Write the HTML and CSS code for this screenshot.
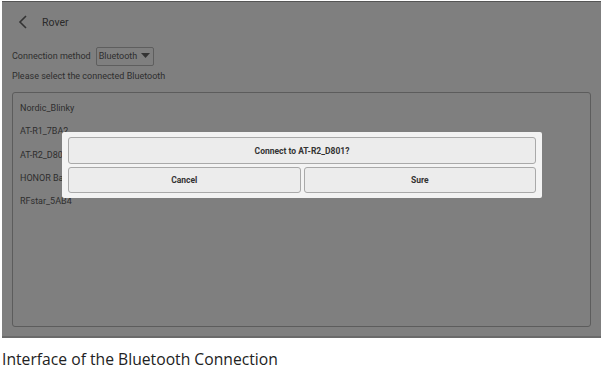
FILE: index.html
```html
<!DOCTYPE html>
<html>
<head>
<meta charset="utf-8">
<link rel="stylesheet" href="styles.css">
</head>
<body>
<div class="screen">
  <div class="header">
    <svg class="back" width="10" height="14" viewBox="0 0 10 14"><path d="M8 1 L2 7 L8 13" fill="none" stroke="#333" stroke-width="1.6"/></svg>
    <span class="title">Rover</span>
  </div>
  <div class="method">
    <span>Connection method</span>
    <span class="select">Bluetooth <svg width="9" height="6" viewBox="0 0 9 6"><path d="M0 0 H9 L4.5 5 Z" fill="#333"/></svg></span>
  </div>
  <div class="hint">Please select the connected Bluetooth</div>
  <div class="list">
    <div class="item">Nordic_Blinky</div>
    <div class="item">AT-R1_7BA2</div>
    <div class="item">AT-R2_D801</div>
    <div class="item">HONOR Band</div>
    <div class="item">RFstar_5AB4</div>
  </div>
  <div class="dialog">
    <div class="btn msg">Connect to AT-R2_D801?</div>
    <div class="row">
      <div class="btn">Cancel</div>
      <div class="btn">Sure</div>
    </div>
  </div>
</div>
<div class="caption">Interface of the Bluetooth Connection</div>
</body>
</html>
```
FILE: styles.css
```css
html, body { margin: 0; padding: 0; background: #fff; }
body { font-family: Roboto, "Liberation Sans", sans-serif; }
.screen {
  position: relative;
  margin: 1px 0 0 2px;
  width: 599px;
  height: 337px;
  background: #7f7f7f;
  border-top: 1px solid #555;
  border-bottom: 2px solid #6a6a6a;
  box-sizing: border-box;
  color: #2e2e2e;
  font-size: 9px;
  padding: 0 10px;
}
.header { display: flex; align-items: center; height: 40px; padding-left: 6px; }
.back { margin-right: 14px; }
.title { font-size: 10.5px; color: #2a2a2a; }
.method { display: flex; align-items: center; gap: 5px; margin-top: 4px; height: 20px; }
.select {
  display: inline-flex; align-items: center; gap: 4px;
  border: 1px solid #5e5e5e; border-radius: 2px;
  padding: 3px 3px 3px 2px; height: 19px; box-sizing: border-box;
}
.hint { margin-top: 2px; height: 16px; line-height: 16px; }
.list {
  margin-top: 8px;
  height: 235px;
  border: 1px solid #5c5c5c;
  border-radius: 3px;
  box-sizing: border-box;
  padding-top: 10px;
}
.item { height: 23.3px; line-height: 10px; padding-left: 7px; }
.dialog {
  position: absolute;
  left: 60px; top: 130px;
  width: 480px; height: 66px;
  background: #f3f3f3;
  border-radius: 2px;
  box-sizing: border-box;
  padding: 5px 6px;
  display: flex; flex-direction: column; gap: 3px;
}
.row { display: flex; gap: 3px; }
.btn {
  flex: 1;
  height: 26px;
  border: 1px solid #a9a9a9;
  border-radius: 3px;
  background: #ececec;
  box-sizing: border-box;
  display: flex; align-items: center; justify-content: center;
  font-weight: bold; font-size: 8.5px; color: #333;
}
.caption {
  margin: 10px 0 0 2px;
  font-family: "Open Sans", sans-serif;
  font-size: 15.7px;
  color: #222;
}
```
